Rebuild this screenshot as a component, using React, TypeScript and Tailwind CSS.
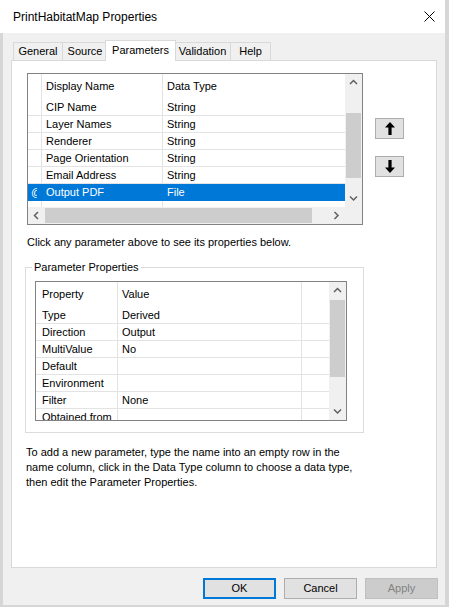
import React from "react";

/* ── data ── */
type Row = [string, string];

const PARAMS: Row[] = [
  ["CIP Name", "String"],
  ["Layer Names", "String"],
  ["Renderer", "String"],
  ["Page Orientation", "String"],
  ["Email Address", "String"],
  ["Output PDF", "File"],
];

const PROPS: Row[] = [
  ["Type", "Derived"],
  ["Direction", "Output"],
  ["MultiValue", "No"],
  ["Default", ""],
  ["Environment", ""],
  ["Filter", "None"],
  ["Obtained from", ""],
];

const TABS = [
  { label: "General", cls: "w-[49px]" },
  { label: "Source", cls: "w-[45px]" },
  { label: "Parameters", cls: "w-[71px]", active: true },
  { label: "Validation", cls: "w-[56px]" },
  { label: "Help", cls: "w-[41px] border-r" },
];

/* ── small drawings ── */
const CHEVRONS = {
  up: "M1 5 L4.5 1.5 L8 5",
  down: "M1 1.5 L4.5 5 L8 1.5",
  left: "M5 1 L1.5 4.5 L5 8",
  right: "M1.5 1 L5 4.5 L1.5 8",
};

function Chevron({ dir }: { dir: keyof typeof CHEVRONS }) {
  const vertical = dir === "up" || dir === "down";
  return (
    <svg
      width={vertical ? 9 : 7}
      height={vertical ? 7 : 9}
      viewBox={vertical ? "0 0 9 7" : "0 0 7 9"}
      fill="none"
      stroke="#606060"
      strokeWidth="1.5"
    >
      <path d={CHEVRONS[dir]} />
    </svg>
  );
}

function ScrollArrow({ dir }: { dir: keyof typeof CHEVRONS }) {
  return (
    <div className="w-[17px] h-[17px] shrink-0 flex items-center justify-center">
      <Chevron dir={dir} />
    </div>
  );
}

function MoveArrow({ down }: { down?: boolean }) {
  return (
    <svg width="10" height="13" viewBox="0 0 10 13" className={down ? "rotate-180" : ""}>
      <path d="M5 0 L10 5.5 H6.6 V13 H3.4 V5.5 H0 Z" fill="#000" />
    </svg>
  );
}

function MoveButton({ down }: { down?: boolean }) {
  return (
    <button className="w-[29px] h-[21px] flex items-center justify-center bg-[#e1e1e1] border border-[#adadad]">
      <MoveArrow down={down} />
    </button>
  );
}

/* ── parameter grid ── */
function ParamGrid() {
  return (
    <div className="w-[336px] h-[152px] border border-[#828282] bg-white flex flex-col text-black">
      <div className="flex h-[133px]">
        <div className="flex-1 flex flex-col">
          {/* header */}
          <div className="flex h-[25px] shrink-0">
            <div className="w-[14px] border-r border-[#e3e3e3]" />
            <div className="w-[121px] border-r border-[#e3e3e3] pl-[4px] flex items-center">Display Name</div>
            <div className="flex-1 pl-[4px] flex items-center">Data Type</div>
          </div>
          {PARAMS.map(([name, type], i) => {
            const sel = i === PARAMS.length - 1;
            return (
              <div
                key={name}
                className={`flex h-[17px] shrink-0 ${sel ? "bg-[#0078d7] text-white" : "border-b border-[#e3e3e3]"}`}
              >
                <div className={`w-[14px] border-r flex items-center pl-[3px] ${sel ? "border-[#0078d7]" : "border-[#e3e3e3]"}`}>
                  {sel && <span className="w-[6px] overflow-hidden leading-none">@</span>}
                </div>
                <div className={`w-[121px] border-r pl-[4px] flex items-center ${sel ? "border-[#0078d7]" : "border-[#e3e3e3]"}`}>
                  {name}
                </div>
                <div className="flex-1 pl-[4px] flex items-center">{type}</div>
              </div>
            );
          })}
          <div className="flex flex-1">
            <div className="w-[14px] border-r border-[#e3e3e3]" />
            <div className="w-[121px] border-r border-[#e3e3e3]" />
          </div>
        </div>
        {/* vertical scrollbar */}
        <div className="w-[17px] bg-[#f0f0f0] flex flex-col">
          <ScrollArrow dir="up" />
          <div className="h-[22px] shrink-0" />
          <div className="h-[65px] mx-[1px] bg-[#cdcdcd] shrink-0" />
          <div className="flex-1" />
          <ScrollArrow dir="down" />
        </div>
      </div>
      {/* horizontal scrollbar */}
      <div className="flex h-[17px] bg-[#f0f0f0]">
        <ScrollArrow dir="left" />
        <div className="w-[267px] my-[1px] bg-[#cdcdcd]" />
        <div className="flex-1" />
        <ScrollArrow dir="right" />
        <div className="w-[17px] bg-[#f0f0f0]" />
      </div>
    </div>
  );
}

/* ── property grid ── */
function PropertyGrid() {
  return (
    <div className="w-[312px] h-[140px] border border-[#828282] bg-white flex overflow-hidden text-black">
      <div className="flex-1 flex flex-col overflow-hidden">
        <div className="flex h-[25px] shrink-0">
          <div className="w-[82px] border-r border-[#e3e3e3] pl-[6px] flex items-center">Property</div>
          <div className="w-[184px] border-r border-[#e3e3e3] pl-[4px] flex items-center">Value</div>
          <div className="flex-1" />
        </div>
        {PROPS.map(([k, v]) => (
          <div key={k} className="flex h-[17px] shrink-0 border-b border-[#e3e3e3]">
            <div className="w-[82px] border-r border-[#e3e3e3] pl-[6px] flex items-center whitespace-nowrap">{k}</div>
            <div className="w-[184px] border-r border-[#e3e3e3] pl-[4px] flex items-center">{v}</div>
            <div className="flex-1" />
          </div>
        ))}
      </div>
      <div className="w-[17px] bg-[#f0f0f0] flex flex-col">
        <ScrollArrow dir="up" />
        <div className="h-[1px] shrink-0" />
        <div className="h-[77px] mx-[1px] bg-[#cdcdcd] shrink-0" />
        <div className="flex-1" />
        <ScrollArrow dir="down" />
      </div>
    </div>
  );
}

/* ── dialog ── */
export default function App() {
  return (
    <div className="w-[449px] h-[607px] flex flex-col bg-[#f0f0f0] border-r-[4px] border-[#d6d6d6] font-['Liberation_Sans',Arial,sans-serif] text-[11px] text-black select-none">
      {/* title bar */}
      <div className="h-[33px] shrink-0 bg-white flex items-center justify-between pl-[13px] pr-[10px]">
        <span className="text-[12px]">PrintHabitatMap Properties</span>
        <svg width="11" height="11" viewBox="0 0 11 11" stroke="#000" strokeWidth="1">
          <path d="M0.5 0.5 L10.5 10.5 M10.5 0.5 L0.5 10.5" />
        </svg>
      </div>

      <div className="flex-1 flex flex-col border-l-[3px] border-b-[2px] border-[#d6d6d6] pl-[8px] pr-[7px]">
        {/* tabs */}
        <div className="mt-[7px] h-[20px] flex items-end pl-[2px]">
          {TABS.map((t) =>
            t.active ? (
              <div
                key={t.label}
                className={`${t.cls} h-[21px] -mb-[1px] -mx-[2px] z-10 bg-white border-t border-l border-r border-[#d9d9d9] flex items-center justify-center pb-[1px]`}
              >
                {t.label}
              </div>
            ) : (
              <div
                key={t.label}
                className={`${t.cls} h-[18px] bg-[#f0f0f0] border-t border-l border-[#d9d9d9] flex items-center justify-center`}
              >
                {t.label}
              </div>
            )
          )}
        </div>

        {/* tab page */}
        <div className="w-[426px] h-[508px] shrink-0 bg-white border border-[#d9d9d9] flex flex-col">
          <div className="flex pl-[15px] pt-[12px]">
            <ParamGrid />
            <div className="ml-[12px] mt-[45px] flex flex-col gap-[17px]">
              <MoveButton />
              <MoveButton down />
            </div>
          </div>

          <p className="ml-[15px] mt-[10px] leading-[15px]">
            Click any parameter above to see its properties below.
          </p>

          <fieldset className="ml-[13px] mt-[10px] w-[339px] border border-[#dcdcdc] pl-[9px] pb-[11px]">
            <legend className="ml-[-3px] px-[2px] leading-[15px]">Parameter Properties</legend>
            <div className="mt-[6px]">
              <PropertyGrid />
            </div>
          </fieldset>

          <p className="ml-[14px] mt-[12px] leading-[15px] whitespace-nowrap">
            To add a new parameter, type the name into an empty row in the
            <br />
            name column, click in the Data Type column to choose a data type,
            <br />
            then edit the Parameter Properties.
          </p>
        </div>

        {/* dialog buttons */}
        <div className="mt-[10px] flex justify-end gap-[8px]">
          <button className="w-[73px] h-[21px] bg-[#e1e1e1] border-2 border-[#0078d7]">OK</button>
          <button className="w-[73px] h-[21px] bg-[#e1e1e1] border border-[#adadad]">Cancel</button>
          <button className="w-[73px] h-[21px] bg-[#cccccc] border border-[#bfbfbf] text-[#838383]">Apply</button>
        </div>
      </div>
    </div>
  );
}
